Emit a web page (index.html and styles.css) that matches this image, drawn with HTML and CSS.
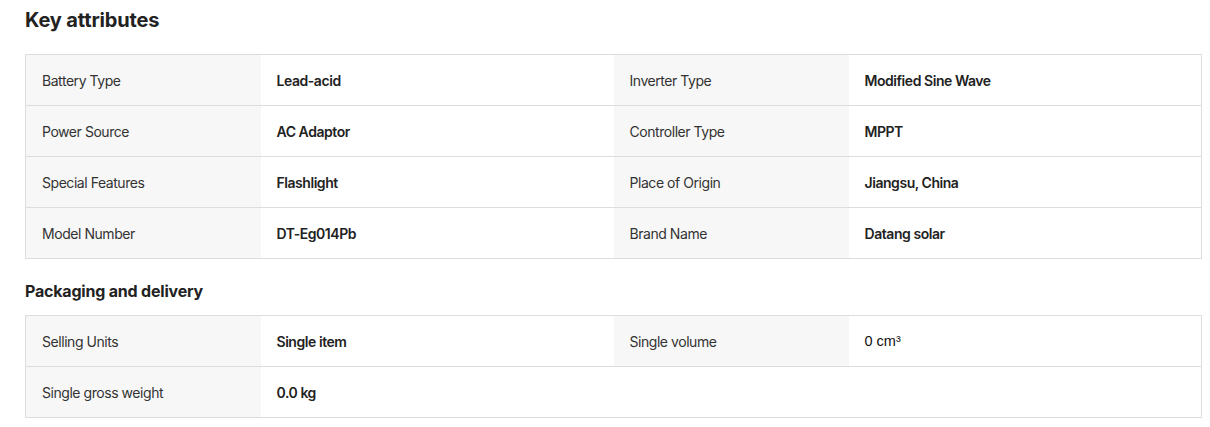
FILE: index.html
```html
<!DOCTYPE html>
<html lang="en">
<head>
    <meta charset="UTF-8" />
    <title>Key attributes</title>
    <link rel="stylesheet" href="styles.css">
</head>
<body>

<div class="attributes">
    <h2 class="title">Key attributes</h2>
    <table class="attr-table">
        <colgroup>
            <col class="col-name"><col class="col-value"><col class="col-name"><col class="col-value">
        </colgroup>
        <tr>
            <td class="attr-name">Battery Type</td>
            <td class="attr-value">Lead-acid</td>
            <td class="attr-name">Inverter Type</td>
            <td class="attr-value">Modified Sine Wave</td>
        </tr>
        <tr>
            <td class="attr-name">Power Source</td>
            <td class="attr-value">AC Adaptor</td>
            <td class="attr-name">Controller Type</td>
            <td class="attr-value">MPPT</td>
        </tr>
        <tr>
            <td class="attr-name">Special Features</td>
            <td class="attr-value">Flashlight</td>
            <td class="attr-name">Place of Origin</td>
            <td class="attr-value">Jiangsu, China</td>
        </tr>
        <tr>
            <td class="attr-name">Model Number</td>
            <td class="attr-value">DT-Eg014Pb</td>
            <td class="attr-name">Brand Name</td>
            <td class="attr-value">Datang solar</td>
        </tr>
    </table>

    <h3 class="subtitle">Packaging and delivery</h3>
    <table class="attr-table">
        <colgroup>
            <col class="col-name"><col class="col-value"><col class="col-name"><col class="col-value">
        </colgroup>
        <tr>
            <td class="attr-name">Selling Units</td>
            <td class="attr-value">Single item</td>
            <td class="attr-name">Single volume</td>
            <td class="attr-value plain">0 cm³</td>
        </tr>
        <tr>
            <td class="attr-name">Single gross weight</td>
            <td class="attr-value">0.0 kg</td>
            <td class="attr-empty"></td>
            <td class="attr-empty"></td>
        </tr>
    </table>
</div>

</body>
</html>
```

FILE: styles.css
```css
body {
    font-family: Inter, "Noto Sans", sans-serif;
    background-color: #ffffff;
    color: #222;
    margin: 0;
    padding: 0;
}

.attributes {
    padding: 7px 8px 0 25px;
}

.title {
    font-size: 20px;
    font-weight: 700;
    color: #222;
    letter-spacing: -0.15px;
    margin: 0 0 21px;
    line-height: 26px;
}

.subtitle {
    font-size: 16px;
    font-weight: 700;
    color: #222;
    letter-spacing: -0.2px;
    margin: 22px 0 14px;
    line-height: 20px;
}

.attr-table {
    width: 1177px;
    border-collapse: collapse;
    table-layout: fixed;
    border: 1px solid #dddddd;
}

.col-name {
    width: 235px;
}

.col-value {
    width: 353px;
}

.attr-table tr {
    border-bottom: 1px solid #dddddd;
}

.attr-table td {
    height: 51px;
    padding: 0 16px;
    font-size: 14px;
    letter-spacing: -0.45px;
    box-sizing: border-box;
}

.attr-name {
    background-color: #f7f7f7;
    color: #333;
}

.attr-value {
    font-weight: 600;
    color: #222;
}

.attr-value.plain {
    font-family: "Liberation Sans", Arial, sans-serif;
    font-size: 14.5px;
    font-weight: 400;
    color: #111;
    letter-spacing: 0;
}
```
